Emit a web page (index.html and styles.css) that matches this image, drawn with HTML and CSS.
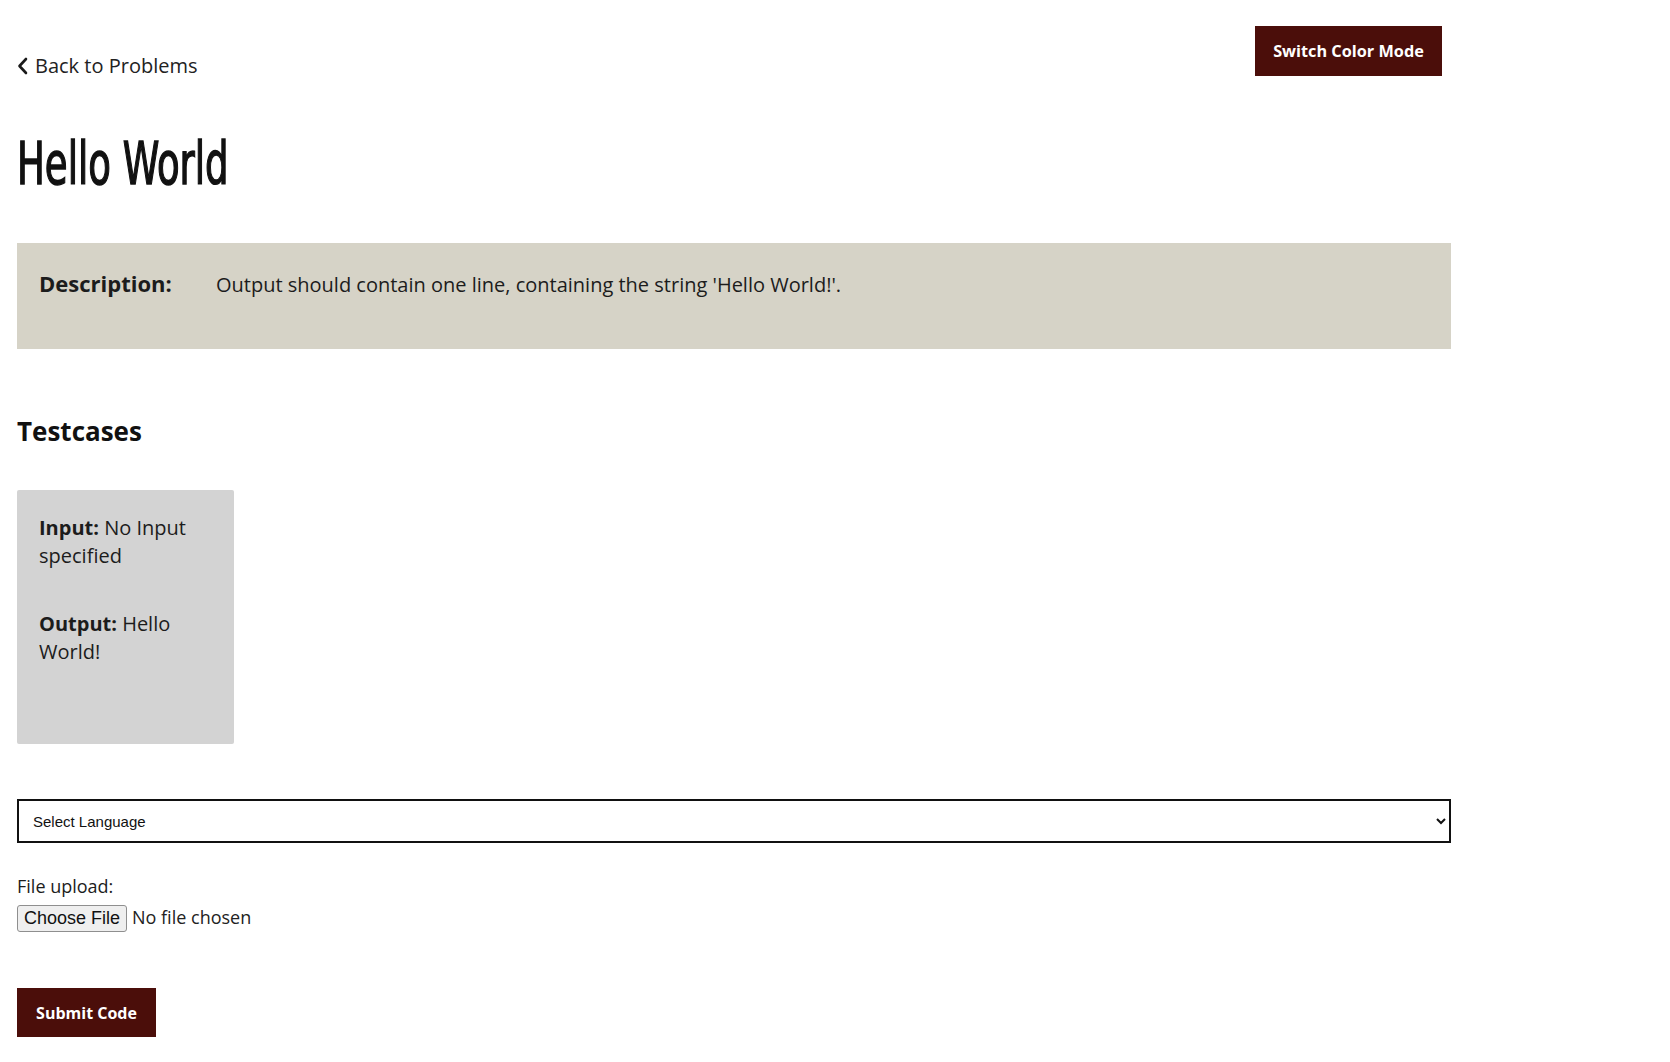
FILE: index.html
```html
<!DOCTYPE html>
<html lang="en">
<head>
<meta charset="utf-8">
<title>Hello World</title>
<link rel="stylesheet" href="styles.css">
</head>
<body>
<div class="page">
  <header class="top">
    <a class="back" href="#">
      <svg class="chev" width="11" height="18" viewBox="0 0 11 18"><polyline points="9,2 2.5,9 9,16" fill="none" stroke="#1a1a1a" stroke-width="2.6" stroke-linecap="round" stroke-linejoin="round"/></svg>
      <span>Back to Problems</span>
    </a>
    <button class="btn mode-btn" type="button">Switch Color Mode</button>
  </header>

  <h1 class="title"><span class="title-text">Hello World</span></h1>

  <section class="desc">
    <span class="desc-label">Description:</span>
    <span class="desc-text">Output should contain one line, containing the string 'Hello World!'.</span>
  </section>

  <h2 class="tc-heading">Testcases</h2>

  <div class="tc-list">
    <div class="tc-card">
      <p class="tc-line"><b>Input:</b> No Input specified</p>
      <p class="tc-line"><b>Output:</b> Hello World!</p>
    </div>
  </div>

  <select class="lang">
    <option>Select Language</option>
  </select>

  <div class="upload">
    <label class="upload-label" for="file">File upload:</label>
    <input class="file-input" id="file" type="file">
  </div>

  <button class="btn submit-btn" type="button">Submit Code</button>
</div>
</body>
</html>
```

FILE: styles.css
```css
html, body {
  margin: 0;
  padding: 0;
  background: #ffffff;
}

body {
  font-family: "Open Sans", "Noto Sans", sans-serif;
  font-size: 18px;
  color: #1c1c1c;
}

.page {
  width: 1434px;
  padding: 0 17px;
}

.top {
  display: flex;
  justify-content: space-between;
  align-items: flex-start;
  padding-top: 26px;
  height: 50px;
}

.back {
  display: flex;
  align-items: center;
  gap: 7px;
  margin-top: 26px;
  font-size: 20px;
  line-height: 27px;
  color: #222;
  text-decoration: none;
}

.chev {
  display: block;
}

.btn {
  background: #4b0e0a;
  color: #ffffff;
  border: none;
  font-family: "Open Sans", sans-serif;
  font-weight: 700;
  font-size: 16px;
  padding: 0;
  cursor: pointer;
}

.mode-btn {
  width: 187px;
  height: 50px;
  margin-right: 9px;
  font-size: 16.3px;
}

.title {
  margin: 59px 0 0;
  height: 58px;
  font-family: "Liberation Sans Narrow", "DejaVu Sans Condensed", "Liberation Sans", sans-serif;
  font-stretch: condensed;
  font-weight: 400;
  font-size: 58px;
  line-height: 58px;
  color: #111;
}

.title-text {
  display: inline-block;
  transform: scaleX(0.71);
  transform-origin: left center;
  -webkit-text-stroke: 1.4px #111;
}

.desc {
  display: flex;
  align-items: baseline;
  box-sizing: border-box;
  height: 106px;
  margin-top: 50px;
  padding: 26px 22px 0;
  background: #d6d3c7;
}

.desc-label {
  flex: 0 0 177px;
  font-weight: 700;
  font-size: 22px;
  line-height: 28px;
}

.desc-text {
  font-size: 20px;
  line-height: 28px;
}

.tc-heading {
  margin: 65px 0 0;
  font-size: 26px;
  font-weight: 700;
  line-height: 35px;
  color: #111;
}

.tc-list {
  display: flex;
  gap: 20px;
  margin-top: 41px;
}

.tc-card {
  box-sizing: border-box;
  width: 217px;
  height: 254px;
  padding: 24px 22px 0;
  background: #d3d3d3;
  border-radius: 2px;
}

.tc-line {
  margin: 0 0 40px;
  font-size: 20px;
  line-height: 28px;
}

.lang {
  display: block;
  box-sizing: border-box;
  width: 1434px;
  height: 44px;
  margin-top: 55px;
  padding: 0 10px;
  border: 2px solid #111;
  border-radius: 0;
  background: #fff;
  font-family: "Liberation Sans", Arial, sans-serif;
  font-size: 15px;
  color: #111;
}

.upload {
  margin-top: 31px;
}

.upload-label {
  display: block;
  font-size: 18px;
  line-height: 24px;
}

.file-input {
  display: block;
  margin-top: 7px;
  font-family: "Open Sans", sans-serif;
  font-size: 18px;
  color: #222;
}

.file-input::file-selector-button {
  font-family: "Liberation Sans", Arial, sans-serif;
  font-size: 18px;
  color: #111;
  background: #efefef;
  border: 1px solid #8f8f8f;
  border-radius: 3px;
  padding: 2px 6px;
  margin-right: 5px;
}

.submit-btn {
  display: block;
  width: 139px;
  height: 49px;
  margin-top: 56px;
}
```
